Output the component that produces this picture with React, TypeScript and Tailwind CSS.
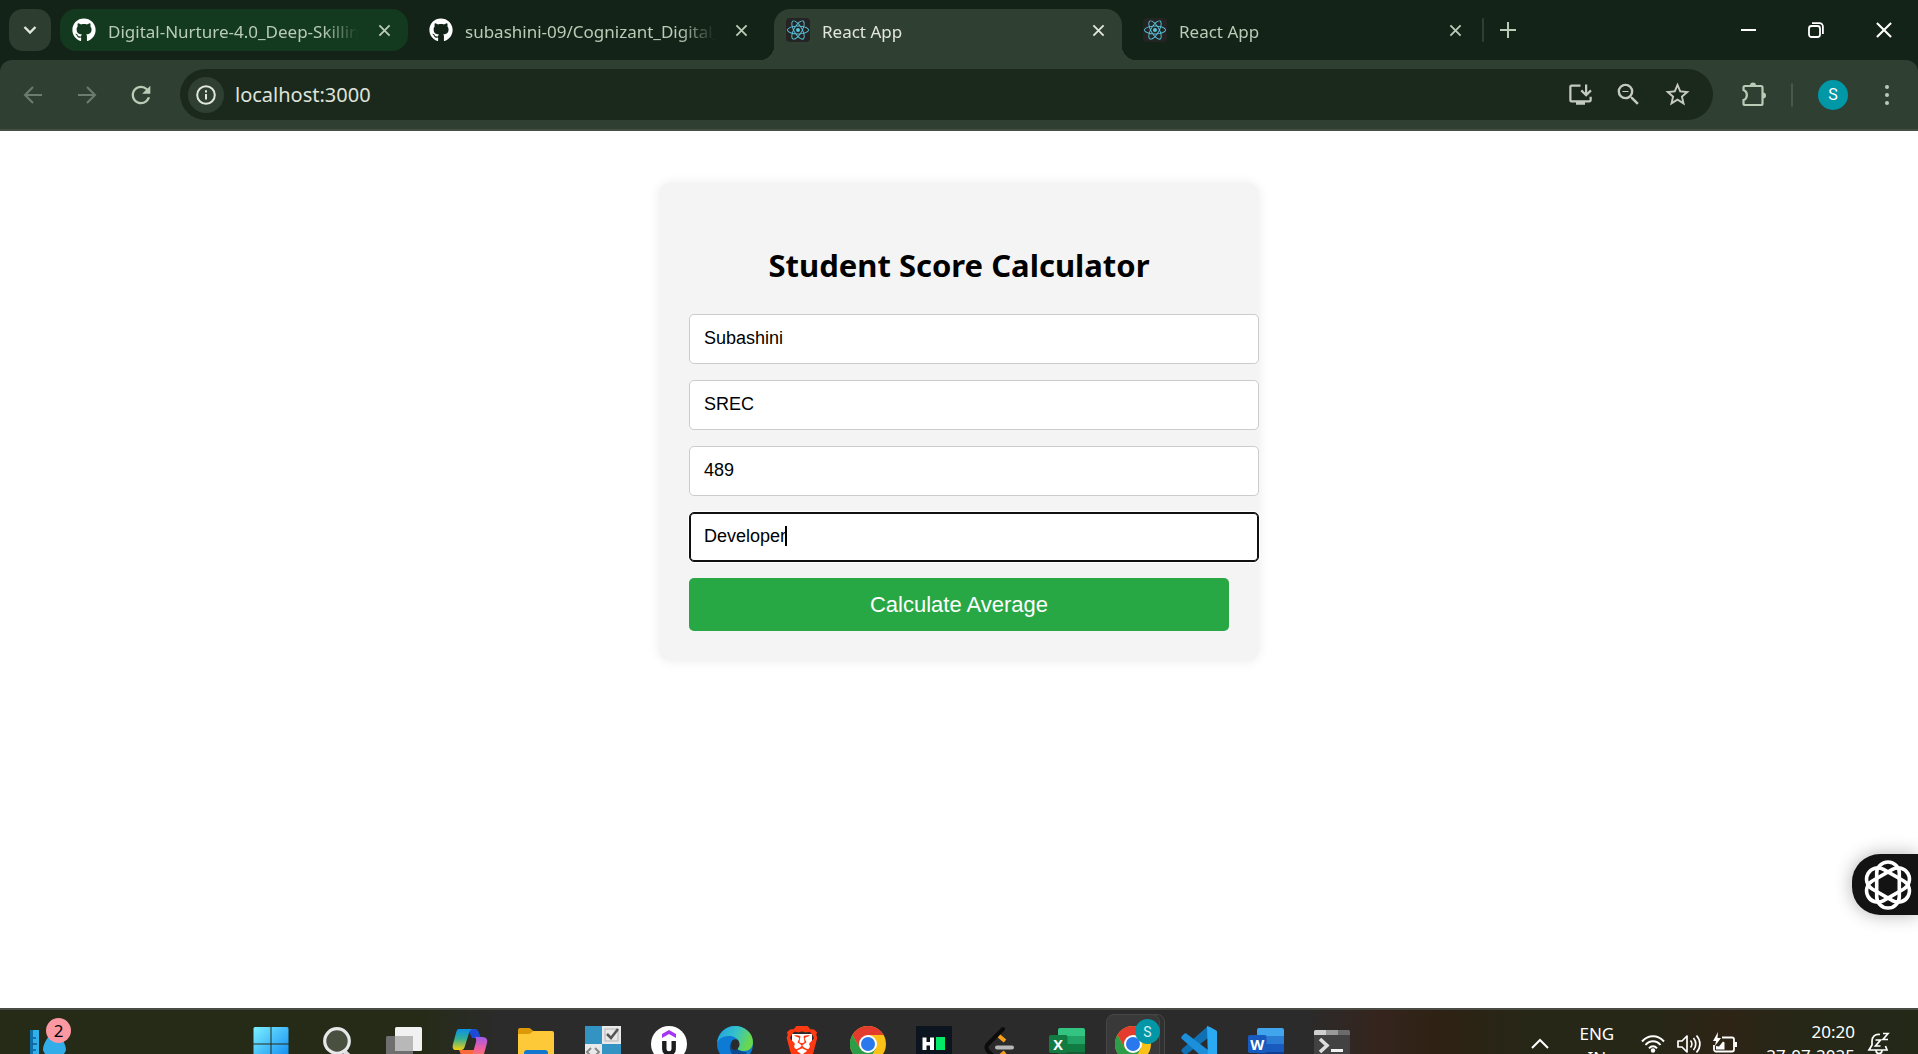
import React from "react";
import { FaGithub, FaReact, FaBrave } from "react-icons/fa6";
import { MdInstallDesktop, MdZoomOut, MdStarBorder, MdRefresh } from "react-icons/md";

const UI = "font-['Noto_Sans',sans-serif]";

function CrossIcon({ size = 14, width = 2 }: { size?: number; width?: number }) {
  return (
    <svg width={size} height={size} viewBox="0 0 14 14" fill="none" stroke="currentColor" strokeWidth={width}>
      <path d="M1.5 1.5l11 11M12.5 1.5l-11 11" />
    </svg>
  );
}

function ReactFavicon() {
  return (
    <span className="flex size-6 shrink-0 items-center justify-center rounded bg-[#242424] text-[#58c4dc]">
      <FaReact size={22} />
    </span>
  );
}

type TabProps = { title: string; icon: "github" | "react"; state?: "active" | "grouped" | "idle" };

function Tab({ title, icon, state = "idle" }: TabProps) {
  const shape =
    state === "active"
      ? "h-[51px] rounded-t-2xl bg-[#2f4032] pb-[9px] text-[#e3e6df]"
      : state === "grouped"
        ? "h-[42px] rounded-2xl bg-[#133a1e] text-[#b9ccb6]"
        : "h-[42px] text-[#b9ccb6]";
  return (
    <div className={`relative flex w-[348px] min-w-0 items-center pr-4 pl-3 ${shape}`}>
      {state === "active" && (
        <>
          <span className="absolute bottom-0 -left-[14px] size-[14px] bg-[radial-gradient(circle_at_0_0,transparent_14px,#2f4032_14px)]" />
          <span className="absolute -right-[14px] bottom-0 size-[14px] bg-[radial-gradient(circle_at_100%_0,transparent_14px,#2f4032_14px)]" />
        </>
      )}
      {icon === "github" ? <FaGithub size={24} className="shrink-0 text-white" /> : <ReactFavicon />}
      <span className="ml-3 min-w-0 flex-1 overflow-hidden pt-[3px] text-[17px] leading-6 whitespace-nowrap [mask-image:linear-gradient(to_right,black_86%,transparent)]">
        {title}
      </span>
      <button aria-label={`Close ${title}`} className="ml-[18px] flex size-4 items-center justify-center">
        <CrossIcon size={13} />
      </button>
    </div>
  );
}

function TabStrip() {
  return (
    <div className="flex h-[60px] shrink-0 bg-[#142317] pt-[9px] pl-[9px]">
      <button
        aria-label="Search tabs"
        className="mr-[9px] flex size-[42px] shrink-0 items-center justify-center rounded-[14px] bg-[#2d3e30] text-[#dfe6dc]"
      >
        <svg width="14" height="10" viewBox="0 0 14 10" fill="none" stroke="currentColor" strokeWidth="2.4">
          <path d="M1.5 2l5.5 5.5L12.500 2" />
        </svg>
      </button>
      <div className="flex min-w-0 gap-[9px]">
        <Tab title="Digital-Nurture-4.0_Deep-Skilling" icon="github" state="grouped" />
        <Tab title="subashini-09/Cognizant_Digital_Nurture" icon="github" />
        <Tab title="React App" icon="react" state="active" />
        <Tab title="React App" icon="react" />
      </div>
      <span className="mt-[9px] ml-[3px] h-6 w-[2px] shrink-0 rounded bg-[#2f4032]" />
      <button aria-label="New tab" className="ml-2 flex h-[42px] w-8 shrink-0 items-center justify-center text-[#b9ccb6]">
        <svg width="16" height="16" viewBox="0 0 16 16" fill="none" stroke="currentColor" strokeWidth="2">
          <path d="M8 0v16M0 8h16" />
        </svg>
      </button>
      <div className="ml-auto flex h-[42px] text-white">
        <button aria-label="Minimize" className="flex w-[68px] items-center justify-center">
          <span className="h-[2px] w-[15px] bg-white" />
        </button>
        <button aria-label="Restore" className="flex w-[68px] items-center justify-center">
          <svg width="16" height="16" viewBox="0 0 16 16" fill="none" stroke="currentColor" strokeWidth="1.8">
            <rect x="1" y="4" width="11" height="11" rx="2.500" />
            <path d="M4 1.200h7.500a3.400 3.400 0 0 1 3.400 3.400V12" />
          </svg>
        </button>
        <button aria-label="Close window" className="flex w-[68px] items-center justify-center">
          <CrossIcon size={18} width={1.6} />
        </button>
      </div>
    </div>
  );
}

function Toolbar() {
  return (
    <div className="shrink-0 bg-[#142317]">
      <div className="flex h-[71px] items-center rounded-t-xl border-b-2 border-[#434f43] bg-[#2f4032] pr-[19px]">
        <div className="flex w-[180px] shrink-0 items-center pl-[22px]">
          <button aria-label="Back" className="flex w-[54px] text-[#6c7d6d]">
            <svg width="22" height="20" viewBox="0 0 22 20" fill="none" stroke="currentColor" strokeWidth="2">
              <path d="M20 10H3.500M11 2L3 10l8 8" />
            </svg>
          </button>
          <button aria-label="Forward" className="flex w-[51px] text-[#6c7d6d]">
            <svg width="22" height="20" viewBox="0 0 22 20" fill="none" stroke="currentColor" strokeWidth="2">
              <path d="M2 10h16.500M11 2l8 8-8 8" />
            </svg>
          </button>
          <button aria-label="Reload" className="text-[#b9ccb6]">
            <MdRefresh size={28} />
          </button>
        </div>
        <div className="flex h-[51px] min-w-0 flex-1 items-center rounded-full bg-[#1b291d] pr-[21px] pl-2 text-[#c5cac1]">
          <button aria-label="Site information" className="flex size-9 shrink-0 items-center justify-center rounded-full bg-[#2f4032] text-[#e3e6df]">
            <svg width="20" height="20" viewBox="0 0 20 20" fill="none" stroke="currentColor" strokeWidth="2">
              <circle cx="10" cy="10" r="8.800" />
              <path d="M10 9v5.500M10 5.200v2.200" />
            </svg>
          </button>
          <input
            aria-label="Address"
            defaultValue="localhost:3000"
            className="ml-[11px] min-w-0 flex-1 bg-transparent text-xl leading-7 text-[#dfe3da] outline-none"
          />
          <div className="flex items-center gap-5">
            <button aria-label="Install app"><MdInstallDesktop size={27} /></button>
            <button aria-label="Zoom"><MdZoomOut size={29} /></button>
            <button aria-label="Bookmark"><MdStarBorder size={29} /></button>
          </div>
        </div>
        <button aria-label="Extensions" className="ml-7 text-[#b9ccb6]">
          <svg width="26" height="26" viewBox="0 0 26 26" fill="none" stroke="currentColor" strokeWidth="2.200">
            <path d="M2.500 8V5.500A1.500 1.500 0 0 1 4 4h16a1.500 1.500 0 0 1 1.500 1.500v16A1.500 1.500 0 0 1 20 23H4a1.500 1.500 0 0 1-1.500-1.500V18c4.500-1.500 4.500-8.500 0-10z" />
            <path d="M9 3.500a3 3 0 0 1 6 0zM22 10.500a3 3 0 0 1 0 6z" fill="currentColor" stroke="none" />
          </svg>
        </button>
        <span className="ml-6 h-6 w-[2px] rounded bg-[#465a49]" />
        <button aria-label="Profile" className="ml-[25px] flex size-[30px] items-center justify-center rounded-full bg-[#0097a7] font-[Roboto,sans-serif] text-base text-white">
          S
        </button>
        <button aria-label="Menu" className="ml-[27px] flex w-[24px] flex-col items-center gap-1 text-[#b9ccb6]">
          <span className="size-1 rounded-full bg-current" />
          <span className="size-1 rounded-full bg-current" />
          <span className="size-1 rounded-full bg-current" />
        </button>
      </div>
    </div>
  );
}

const field =
  "block h-[50px] w-[calc(100%+30px)] rounded-[5px] border bg-white px-[14px] pb-[2px] text-lg leading-6 text-black outline-none";

function ScoreCard() {
  return (
    <form
      onSubmit={(e) => e.preventDefault()}
      className="mx-auto mt-[52px] w-[600px] max-w-full rounded-xl bg-[#f4f4f4] px-[30px] pt-[62px] pb-[30px] shadow-[0_0_12px_rgba(0,0,0,0.08)]"
    >
      <h1 className={`${UI} mb-[29px] text-center text-[31px] leading-10 font-bold text-black`}>Student Score Calculator</h1>
      <div className="flex flex-col gap-4 font-['Liberation_Sans',Arial,sans-serif]">
        <input aria-label="Name" defaultValue="Subashini" className={`${field} border-[#ccc]`} />
        <input aria-label="School" defaultValue="SREC" className={`${field} border-[#ccc]`} />
        <input aria-label="Total score" defaultValue="489" className={`${field} border-[#ccc]`} />
        <div className="relative">
          <input
            aria-label="Goal"
            defaultValue="Developer"
            className={`${field} border-[#101010] shadow-[inset_0_0_0_1px_#101010,0_0_0_1px_#ffffff]`}
          />
          <span className="absolute top-[14px] left-24 h-5 w-[2px] bg-black" />
        </div>
        <button type="submit" className="h-[53px] rounded-[5px] bg-[#28a745] text-[22px] leading-7 text-white">
          Calculate Average
        </button>
      </div>
    </form>
  );
}

function AssistantButton() {
  return (
    <button
      aria-label="Open assistant"
      className="absolute right-0 bottom-[93px] flex h-[61px] w-[66px] items-center rounded-l-[28px] bg-[#131313] pl-3 shadow-[0_0_18px_rgba(0,0,0,0.3)]"
    >
      <svg width="48" height="50" viewBox="0 0 48 50" fill="none" stroke="#fff" strokeWidth="3.600">
        <rect x="12.700" y="2" width="22.600" height="46" rx="11.300" />
        <rect x="12.700" y="2" width="22.600" height="46" rx="11.300" transform="rotate(60 24 25)" />
        <rect x="12.700" y="2" width="22.600" height="46" rx="11.300" transform="rotate(120 24 25)" />
      </svg>
    </button>
  );
}

function ChromeLogo() {
  return (
    <svg width="36" height="36" viewBox="0 0 36 36">
      <circle cx="18" cy="18" r="18" fill="#fbc116" />
      <path d="M18 0A18 18 0 0 1 33.600 9H18L10.200 22.500 2.400 9A18 18 0 0 1 18 0z" fill="#e33b2e" />
      <path d="M2.400 9a18 18 0 0 0 15.600 27l7.800-13.500H10.200z" fill="#2d9d49" />
      <circle cx="18" cy="18" r="9" fill="#fff" />
      <circle cx="18" cy="18" r="7" fill="#2a78ee" />
    </svg>
  );
}

function OfficeLogo({ letter, tones }: { letter: string; tones: [string, string, string, string, string] }) {
  return (
    <svg width="36" height="36" viewBox="0 0 36 36">
      <path d="M9 4a2 2 0 0 1 2-2h23a2 2 0 0 1 2 2v7H9z" fill={tones[0]} />
      <path d="M9 10h27v8H9z" fill={tones[1]} />
      <path d="M9 18h27v8H9z" fill={tones[2]} />
      <path d="M9 26h27v6a2 2 0 0 1-2 2H11a2 2 0 0 1-2-2z" fill={tones[3]} />
      <rect x="0" y="9" width="18.500" height="18" rx="1.800" fill={tones[4]} />
      <text x="9.200" y="23.500" textAnchor="middle" fill="#fff" fontFamily="Open Sans, sans-serif" fontWeight="700" fontSize="14.500">
        {letter}
      </text>
    </svg>
  );
}

function StartLogo() {
  return (
    <svg width="36" height="36" viewBox="0 0 36 36">
      <defs>
        <linearGradient id="win" x1="0" y1="0" x2="1" y2="1">
          <stop offset="0" stopColor="#7cf0ff" />
          <stop offset="1" stopColor="#0a85f2" />
        </linearGradient>
      </defs>
      <path
        d="M2 1h15.500v16.500H.5V2.500A1.500 1.500 0 0 1 2 1zM18.500 1H34a1.500 1.500 0 0 1 1.500 1.500v15h-17zM.5 18.500h17V36H.5zM18.500 18.500h17V36h-17z"
        fill="url(#win)"
      />
    </svg>
  );
}

function SearchLogo() {
  return (
    <svg width="36" height="36" viewBox="0 0 36 36" fill="none">
      <path d="M25 25l8 8" stroke="#d8dbe0" strokeWidth="4.500" strokeLinecap="round" />
      <circle cx="18" cy="15" r="12.300" fill="#49503f" stroke="#e6e8ea" strokeWidth="3.200" />
    </svg>
  );
}

function TaskViewLogo() {
  return (
    <svg width="36" height="36" viewBox="0 0 36 36">
      <rect x="9" y="1" width="27" height="24" rx="1.500" fill="#f1f1f1" />
      <rect x="0" y="10" width="27" height="24" rx="1.500" fill="#6f6f6f" />
      <path d="M9 10h18v15H9z" fill="#b8b8b8" />
    </svg>
  );
}

function CopilotLogo() {
  return (
    <svg width="36" height="36" viewBox="0 0 36 36">
      <defs>
        <linearGradient id="cop1" x1="0" y1="0" x2="0" y2="1">
          <stop offset="0" stopColor="#0d8fe8" />
          <stop offset=".45" stopColor="#2fae9a" />
          <stop offset="1" stopColor="#f2cf12" />
        </linearGradient>
        <linearGradient id="cop2" x1="0" y1="0" x2="0" y2="1">
          <stop offset="0" stopColor="#a05be8" />
          <stop offset=".5" stopColor="#ee5fa0" />
          <stop offset="1" stopColor="#ff8a4a" />
        </linearGradient>
      </defs>
      <path d="M7 24h18l-4 9c-1 2-2 2-4 2h-3c-2 0-3-1-4-4z" fill="#fa6a3c" />
      <path d="M16 3h7c2 0 3 1 4 4l2 5h-9z" fill="#1d4bd6" />
      <path d="M7 3h14c-2 0-3 1-4 4l-4 13c-1 3-2 4-4 4H4c-3 0-4-2-3-6L4 7c1-3 1-4 3-4z" fill="url(#cop1)" />
      <path d="M23 11h7c4 0 6 2 5 6l-3 11c-1 4-3 6-6 6H16c2 0 3-1 4-4l4-14c.500-2 0-4-1-5z" fill="url(#cop2)" />
    </svg>
  );
}

function FolderLogo() {
  return (
    <svg width="36" height="36" viewBox="0 0 36 36">
      <path d="M0 4a2 2 0 0 1 2-2h9c2 0 3 3 5 3v5H0z" fill="#dc9a09" />
      <path d="M0 8h11c2 0 3-3 5-3h18a2 2 0 0 1 2 2v26H0z" fill="#fdc938" />
      <path d="M6 27a3 3 0 0 1 3-3h18a3 3 0 0 1 3 3v9H6z" fill="#1278cf" />
    </svg>
  );
}

function TilesLogo() {
  return (
    <svg width="36" height="36" viewBox="0 0 36 36">
      <rect width="36" height="36" fill="#3394c4" />
      <path d="M17 0h19v18H17zM0 18h17v18H0z" fill="#e9e9e9" />
      <rect x="20" y="3" width="13" height="12" fill="none" stroke="#b5b5b5" />
      <path d="M22 8l4 4 7-9" fill="none" stroke="#555" strokeWidth="2.500" />
      <path d="M6 22l-4 4 4 4M10 22l4 4-4 4" fill="none" stroke="#888" strokeWidth="2" />
    </svg>
  );
}

function UdemyLogo() {
  return (
    <svg width="36" height="36" viewBox="0 0 36 36">
      <circle cx="18" cy="18" r="18" fill="#fff" />
      <path d="M11 8l7-4 7 4v4l-7-4-7 4z" fill="#a435f0" />
      <path d="M13.300 15v8c0 6 9.400 6 9.400 0v-8" fill="none" stroke="#1c1d1f" strokeWidth="4.400" />
    </svg>
  );
}

function EdgeLogo() {
  return (
    <svg width="36" height="36" viewBox="0 0 36 36">
      <defs>
        <linearGradient id="edge1" x1="0" y1="0" x2="1" y2=".3">
          <stop offset="0" stopColor="#1f9fdf" />
          <stop offset=".55" stopColor="#35c1cc" />
          <stop offset="1" stopColor="#69d84c" />
        </linearGradient>
      </defs>
      <circle cx="18" cy="18" r="18" fill="#0d7bd3" />
      <path d="M14 26c-3-6 0-11 5-12 0 0 4 1 3 6-1 3 2 6 8 6l-6 8c-5-1-8-4-10-8z" fill="#0c4b94" />
      <path d="M0 17C1 7 9 0 18 0c10 0 18 7 18 16 0 6-4 9-9 9-4 0-7-1-6-3 3-3 1-11-7-12C7 9.500 2 12 0 17z" fill="url(#edge1)" />
      <path d="M21 22c2-2 2-5 0-8-3-2-7 0-7 4 0 2 .500 4 1 5 2 2 5 1 6-1z" fill="#2b2b2b" />
    </svg>
  );
}

function BraveLogo() {
  return (
    <span className="relative flex size-9 items-center justify-center">
      <span className="absolute top-2 left-2 h-6 w-5 rounded-b-xl bg-white" />
      <FaBrave size={36} className="relative text-[#ff3a12]" />
    </span>
  );
}

function HackerRankLogo() {
  return (
    <svg width="36" height="36" viewBox="0 0 36 36">
      <rect width="36" height="36" fill="#0b141f" />
      <path d="M6.500 11.500h4v4.500h3.500v-4.500h4v12.500h-4V19.500h-3.500V24h-4z" fill="#fff" />
      <rect x="20" y="11" width="9" height="13" fill="#05e968" />
    </svg>
  );
}

function LeetCodeLogo() {
  return (
    <svg width="36" height="36" viewBox="0 0 36 36" fill="none" strokeLinecap="round" strokeWidth="4">
      <path d="M21 3L6 18c-2 2-2 5 0 7l7 7" stroke="#0c0c0c" />
      <path d="M17 10l6 5M17 31l6-5" stroke="#f8a01c" strokeLinecap="butt" />
      <path d="M15 21.500h15" stroke="#b7b7b7" />
    </svg>
  );
}

function VsCodeLogo() {
  return (
    <svg width="36" height="36" viewBox="0 0 36 36">
      <path d="M27 0L1 23c-1 1-1 2 0 3l2 2c1 1 2 1 3 0L27 12z" fill="#0f70b3" />
      <path d="M27 36L1 13c-1-1-1-2 0-3l2-2c1-1 2-1 3 0l21 16z" fill="#1c8fdb" />
      <path d="M26 0c3 1 6 2.500 8.500 4 1 .6 1.500 1 1.500 2v24c0 1-.5 1.600-1.500 2L27 36z" fill="#2aaaf2" />
    </svg>
  );
}

function TerminalLogo() {
  return (
    <svg width="36" height="36" viewBox="0 0 36 36">
      <path d="M0 9h36v25H0z" fill="#424242" />
      <path d="M0 9V5.500A1.500 1.500 0 0 1 1.500 4H12v5z" fill="#cfcfcf" />
      <path d="M12 4h12v5H12z" fill="#9a9a9a" />
      <path d="M24 4h10.500A1.500 1.500 0 0 1 36 5.500V9H24z" fill="#6b6b6b" />
      <path d="M6 13l7 6.500L6 26" fill="none" stroke="#dedede" strokeWidth="3.600" />
      <path d="M17 24.500h12" stroke="#f2f2f2" strokeWidth="3" />
    </svg>
  );
}

const apps: { name: string; icon: React.ReactNode }[] = [
  { name: "Start", icon: <StartLogo /> },
  { name: "Search", icon: <SearchLogo /> },
  { name: "Task view", icon: <TaskViewLogo /> },
  { name: "Copilot", icon: <CopilotLogo /> },
  { name: "File Explorer", icon: <FolderLogo /> },
  { name: "Tasks", icon: <TilesLogo /> },
  { name: "Udemy", icon: <UdemyLogo /> },
  { name: "Edge", icon: <EdgeLogo /> },
  { name: "Brave", icon: <BraveLogo /> },
  { name: "Chrome", icon: <ChromeLogo /> },
  { name: "HackerRank", icon: <HackerRankLogo /> },
  { name: "LeetCode", icon: <LeetCodeLogo /> },
  { name: "Excel", icon: <OfficeLogo letter="X" tones={["#34c481", "#21a366", "#107c41", "#185c37", "#117b41"]} /> },
  { name: "Chrome, profile S", icon: <ChromeLogo /> },
  { name: "VS Code", icon: <VsCodeLogo /> },
  { name: "Word", icon: <OfficeLogo letter="W" tones={["#41a5ee", "#2b7cd3", "#185abd", "#103f91", "#185abd"]} /> },
  { name: "Terminal", icon: <TerminalLogo /> },
];

function Taskbar() {
  return (
    <footer className="flex h-[46px] shrink-0 items-start overflow-hidden border-t-2 border-[#4a4b45] bg-[linear-gradient(to_right,#262b18_0%,#262b18_22%,#2b2b2b_26%,#2b2b2b_68%,#35241d_72%,#2e2214_75%,#262717_80%,#262717_86%,#2e2416_90%,#262717_94%,#232817_100%)] text-white">
      <div className="w-[238px] shrink-0 pl-[30px]">
        <button aria-label="Widgets" className="relative block">
          <svg width="40" height="44" viewBox="0 0 40 44">
            <rect x="0" y="20" width="9" height="24" fill="#2fb0ea" />
            <path d="M0 20h3v24H0z" fill="#0f6ea8" />
            <path d="M3 28h3M2 34h5M3 40h3" stroke="#0c5c94" strokeWidth="1.500" />
            <path d="M24 18c6 8 12 15 12 22a12 12 0 0 1-23 0c0-7 6-14 11-22z" fill="#31aeea" />
          </svg>
          <span className={`${UI} absolute top-2 left-4 flex size-[25px] items-center justify-center rounded-full bg-[#fc98a2] text-[17px] leading-6 text-black`}>
            2
          </span>
        </button>
      </div>
      <div className="flex w-[1127px] shrink-0">
        {apps.map((app) =>
          app.name === "Chrome, profile S" ? (
            <button key={app.name} aria-label={app.name} className="relative flex h-[60px] flex-1 justify-center pt-1">
              <span className="absolute top-1 left-[7px] h-14 w-[58px] rounded-lg border border-[#474747] bg-[#303030]" />
              <span className="absolute top-1 left-[6px] h-14 w-[54px] rounded-lg border border-[#474747] bg-[#393939]" />
              <span className="relative mt-3">{app.icon}</span>
              <span className="absolute top-[9px] left-[35px] flex size-[25px] items-center justify-center rounded-full bg-[#0296a6] font-[Roboto,sans-serif] text-sm text-[#d9f0f2]">
                S
              </span>
            </button>
          ) : (
            <button key={app.name} aria-label={app.name} className="flex h-[60px] flex-1 justify-center pt-4">
              {app.icon}
            </button>
          ),
        )}
      </div>
      <div className={`${UI} ml-auto flex shrink-0 items-start pr-[27px] text-[17px] leading-6`}>
        <button aria-label="Show hidden icons" className="mt-[28px] mr-[31px]">
          <svg width="18" height="12" viewBox="0 0 18 12" fill="none" stroke="currentColor" strokeWidth="2">
            <path d="M1 10l8-8 8 8" />
          </svg>
        </button>
        <button aria-label="Language" className="mt-3 mr-[27px] h-12 text-center leading-6">
          ENG
          <br />
          IN
        </button>
        <button aria-label="Quick settings" className="mt-[22px] mr-[29px] flex gap-3">
          <svg width="24" height="24" viewBox="0 0 24 24" fill="none" stroke="currentColor" strokeWidth="2">
            <path d="M1 9.500C7 2.500 17 2.500 23 9.500M4.500 13c4-5 11-5 15 0M8 16.300c2.300-2.700 5.700-2.700 8 0" />
            <circle cx="12" cy="18.500" r="2.200" fill="currentColor" stroke="none" />
          </svg>
          <svg width="24" height="24" viewBox="0 0 24 24" fill="none" stroke="currentColor" strokeWidth="1.700" strokeLinejoin="round">
            <path d="M1 9h4l5-5v16l-5-5H1z" />
            <path d="M13.500 8.500c1.800 2 1.800 5 0 7M16.500 6c3 3.500 3 8.500 0 12M19.500 3.500c4.500 5 4.500 12 0 17" />
          </svg>
          <svg width="24" height="24" viewBox="0 0 24 24" fill="none" stroke="currentColor" strokeWidth="1.800">
            <path d="M9 5.500h10a2 2 0 0 1 2 2v10a2 2 0 0 1-2 2H3a2 2 0 0 1-2-2V13" />
            <path d="M21.500 10H24v5h-2.500zM3 17.500V14l3 .500 4-5 1.500 1v7zM5 0L0 9h3l-1 5 6-8H4.500z" fill="currentColor" stroke="none" />
          </svg>
        </button>
        <button aria-label="Date and time" className="mt-[10px] mr-3 h-12 text-right leading-6">
          20:20
          <br />
          27-07-2025
        </button>
        <button aria-label="Notifications" className="mt-[21px]">
          <svg width="24" height="24" viewBox="0 0 24 24" fill="none" stroke="currentColor" strokeWidth="1.700">
            <path d="M13 3.500C8 2.500 5 6 5 10v4l-3 5h18l-1.500-4M9 19.500a3 3 0 0 0 6 0" />
            <path d="M8.500 9h5l-5 6h5M16 2.500h5l-5 6h5" />
          </svg>
        </button>
      </div>
    </footer>
  );
}

export default function App() {
  return (
    <div className={`${UI} flex h-screen flex-col overflow-hidden bg-white`}>
      <TabStrip />
      <Toolbar />
      <main className="relative min-h-0 flex-1 overflow-hidden bg-white">
        <ScoreCard />
        <AssistantButton />
      </main>
      <Taskbar />
    </div>
  );
}
